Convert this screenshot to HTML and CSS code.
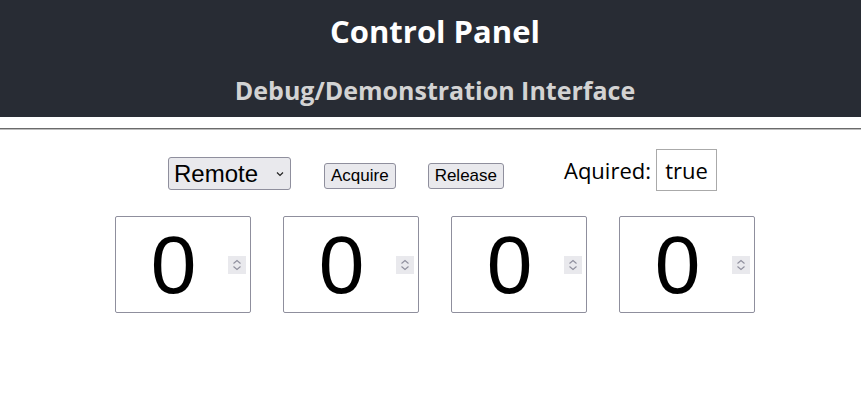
FILE: index.html
```html
<!DOCTYPE html>
<html>
<head>
<meta charset="utf-8">
<link rel="stylesheet" href="styles.css">
</head>
<body>
<header class="app-header">
  <h1 class="title">Control Panel</h1>
  <h2 class="subtitle">Debug/Demonstration Interface</h2>
</header>
<hr class="divider">
<div class="controls">
  <select class="mode">
    <option>Remote</option>
    <option>Local</option>
  </select>
  <button class="btn btn-acquire">Acquire</button>
  <button class="btn">Release</button>
  <div class="status">
    <span class="status-label">Aquired:</span>
    <span class="status-value">true</span>
  </div>
</div>
<div class="values">
  <div class="num-box"><input class="num" type="number" value="0"><span class="spin"><svg width="18" height="18" viewBox="0 0 18 18"><path d="M5.5 7.5 L9 4.5 L12.5 7.5" fill="none" stroke="#8f8f9d" stroke-width="1.1"/><path d="M5.5 10.5 L9 13.5 L12.5 10.5" fill="none" stroke="#8f8f9d" stroke-width="1.1"/></svg></span></div>
  <div class="num-box"><input class="num" type="number" value="0"><span class="spin"><svg width="18" height="18" viewBox="0 0 18 18"><path d="M5.5 7.5 L9 4.5 L12.5 7.5" fill="none" stroke="#8f8f9d" stroke-width="1.1"/><path d="M5.5 10.5 L9 13.5 L12.5 10.5" fill="none" stroke="#8f8f9d" stroke-width="1.1"/></svg></span></div>
  <div class="num-box"><input class="num" type="number" value="0"><span class="spin"><svg width="18" height="18" viewBox="0 0 18 18"><path d="M5.5 7.5 L9 4.5 L12.5 7.5" fill="none" stroke="#8f8f9d" stroke-width="1.1"/><path d="M5.5 10.5 L9 13.5 L12.5 10.5" fill="none" stroke="#8f8f9d" stroke-width="1.1"/></svg></span></div>
  <div class="num-box"><input class="num" type="number" value="0"><span class="spin"><svg width="18" height="18" viewBox="0 0 18 18"><path d="M5.5 7.5 L9 4.5 L12.5 7.5" fill="none" stroke="#8f8f9d" stroke-width="1.1"/><path d="M5.5 10.5 L9 13.5 L12.5 10.5" fill="none" stroke="#8f8f9d" stroke-width="1.1"/></svg></span></div>
</div>
</body>
</html>
```
FILE: styles.css
```css
html, body {
  margin: 0;
  padding: 0;
  background: #fff;
  font-family: "Open Sans", "DejaVu Sans", sans-serif;
}

body {
  padding-left: 9px;
}

.app-header {
  background: #282c34;
  height: 117px;
  margin-left: -9px;
  padding-left: 9px;
  display: flex;
  flex-direction: column;
  align-items: center;
}

.title {
  margin: 12px 0 0;
  font-size: 31px;
  line-height: 38px;
  font-weight: 700;
  color: #fff;
}

.subtitle {
  margin: 25px 0 0;
  font-size: 25px;
  line-height: 30px;
  font-weight: 700;
  color: #d3d3d3;
}

.divider {
  margin: 11px 0 0 -9px;
  border: 0;
  border-top: 1px solid #6b6b6b;
  border-bottom: 1px solid #bdbdbd;
  height: 0;
}

.controls {
  display: flex;
  align-items: flex-start;
  justify-content: center;
  margin-top: 19px;
  padding-left: 15px;
}

.mode {
  appearance: none;
  -webkit-appearance: none;
  font-family: "Liberation Sans", Arial, sans-serif;
  font-size: 24px;
  width: 123px;
  height: 33px;
  padding: 0 0 0 5px;
  background-color: #e9e9ed;
  background-image: url("data:image/svg+xml;utf8,<svg xmlns='http://www.w3.org/2000/svg' width='8' height='6' viewBox='0 0 8 6'><path d='M1 1.5 L4 4.5 L7 1.5' fill='none' stroke='%23222' stroke-width='1.2'/></svg>");
  background-repeat: no-repeat;
  background-position: right 6px center;
  border: 1px solid #8f8f9d;
  border-radius: 3px;
  color: #000;
  margin-top: 8px;
}

.btn {
  font-family: "Liberation Sans", Arial, sans-serif;
  font-size: 17px;
  height: 26px;
  padding: 0 6px;
  background: #e9e9ed;
  border: 1px solid #8f8f9d;
  border-radius: 3px;
  color: #000;
  margin-top: 14px;
  margin-left: 32px;
}

.btn-acquire {
  margin-left: 33px;
}

.status {
  display: flex;
  align-items: center;
  gap: 5px;
  margin-left: 60px;
}

.status-label {
  font-size: 22px;
  color: #000;
}

.status-value {
  font-size: 22px;
  border: 1px solid #aaa;
  width: 59px;
  height: 40px;
  display: flex;
  align-items: center;
  justify-content: center;
  box-sizing: content-box;
}

.values {
  display: flex;
  justify-content: center;
  gap: 32px;
  margin-top: 25px;
}

.num-box {
  box-sizing: border-box;
  width: 136px;
  height: 97px;
  border: 1px solid #8f8f9d;
  border-radius: 2px;
  display: flex;
  align-items: center;
  background: #fff;
}

.num {
  flex: 1;
  min-width: 0;
  height: 100%;
  box-sizing: border-box;
  border: 0;
  outline: none;
  padding: 0 0 0 3px;
  font-family: "Liberation Sans", Arial, sans-serif;
  font-size: 82px;
  text-align: center;
  color: #000;
  background: transparent;
  -moz-appearance: textfield;
}

.num::-webkit-inner-spin-button,
.num::-webkit-outer-spin-button {
  -webkit-appearance: none;
  margin: 0;
}

.spin {
  flex: none;
  width: 18px;
  height: 18px;
  background: #e9e9ed;
  margin: 1px 4px 0 0;
  display: flex;
}
```
